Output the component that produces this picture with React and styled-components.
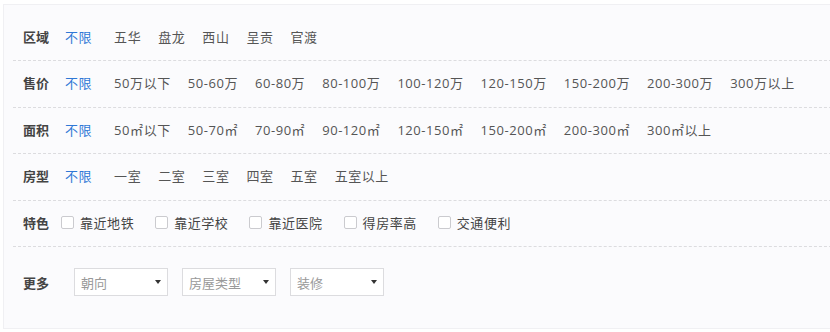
import React from 'react'
import styled, { createGlobalStyle } from 'styled-components'

const GlobalStyle = createGlobalStyle`
  body {
    margin: 0;
    background: #fff;
    font-family: "Open Sans", "Noto Sans CJK SC", sans-serif;
    font-size: 13px;
  }
`

const Panel = styled.div`
  margin: 4px 0 0 3px;
  width: 840px;
  height: 325px;
  box-sizing: border-box;
  border: 1px solid #f0f0f3;
  background: #fbfbfd;
  padding: 9.5px 0 0 9px;
`

const Row = styled.div`
  display: flex;
  align-items: center;
  box-sizing: border-box;
  height: ${props => (props.last ? '80px' : '46.5px')};
  padding: ${props => (props.last ? '0 0 10px 10px' : '0 0 2.5px 10px')};
  border-bottom: ${props => (props.last ? 'none' : '1px dashed #dcdcdf')};
`

const Label = styled.span`
  width: 38px;
  flex-shrink: 0;
  font-weight: bold;
  color: #444;
`

const Options = styled.div`
  display: flex;
  align-items: center;
  gap: ${props => props.gap || 17}px;
  margin-left: ${props => props.offset || 0}px;
  letter-spacing: ${props => (props.tight ? '0' : '0.55px')};
`

const Option = styled.a`
  color: ${props => (props.active ? '#2f78d6' : '#555')};
  margin: ${props => (props.active ? '0 5px 0 4px' : '0')};
  cursor: pointer;
  white-space: nowrap;
`

const Check = styled.label`
  display: flex;
  align-items: center;
  gap: 6px;
  color: #444;
  cursor: pointer;
`

const Box = styled.span`
  width: 13px;
  height: 13px;
  box-sizing: border-box;
  border: 1px solid #cbcbcf;
  border-radius: 2px;
  background: #fff;
`

const Select = styled.div`
  display: flex;
  align-items: center;
  justify-content: space-between;
  width: 94px;
  height: 28px;
  box-sizing: border-box;
  padding: 0 5px 0 6px;
  border: 1px solid #dcdcdf;
  background: #fff;
  color: #999;
  cursor: pointer;
`

const Caret = styled.span`
  width: 0;
  height: 0;
  border-left: 3.5px solid transparent;
  border-right: 3.5px solid transparent;
  border-top: 4px solid #333;
  margin-right: 1px;
`

const filters = [
  { label: '区域', items: ['五华', '盘龙', '西山', '呈贡', '官渡'] },
  {
    label: '售价',
    items: ['50万以下', '50-60万', '60-80万', '80-100万', '100-120万', '120-150万', '150-200万', '200-300万', '300万以上']
  },
  {
    label: '面积',
    items: ['50㎡以下', '50-70㎡', '70-90㎡', '90-120㎡', '120-150㎡', '150-200㎡', '200-300㎡', '300㎡以上']
  },
  { label: '房型', items: ['一室', '二室', '三室', '四室', '五室', '五室以上'] }
]

const features = ['靠近地铁', '靠近学校', '靠近医院', '得房率高', '交通便利']
const selects = ['朝向', '房屋类型', '装修']

export default function App() {
  return (
    <React.Fragment>
      <GlobalStyle />
      <Panel>
        {filters.map(f => (
          <Row key={f.label}>
            <Label>{f.label}</Label>
            <Options>
              <Option active>不限</Option>
              {f.items.map(item => (
                <Option key={item}>{item}</Option>
              ))}
            </Options>
          </Row>
        ))}
        <Row>
          <Label>特色</Label>
          <Options gap={21}>
            {features.map(item => (
              <Check key={item}>
                <Box />
                {item}
              </Check>
            ))}
          </Options>
        </Row>
        <Row last>
          <Label>更多</Label>
          <Options gap={14} offset={13} tight>
            {selects.map(s => (
              <Select key={s}>
                {s}
                <Caret />
              </Select>
            ))}
          </Options>
        </Row>
      </Panel>
    </React.Fragment>
  )
}
